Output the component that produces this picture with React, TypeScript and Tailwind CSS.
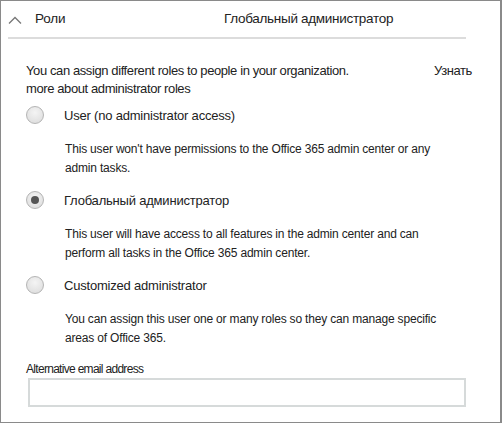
import React from "react";

function Radio({ checked }: { checked?: boolean }) {
  return (
    <div className="w-[18px] h-[18px] rounded-full border border-[#b4b4b4] bg-[radial-gradient(circle_at_50%_35%,#f4f4f4,#dadada)] flex items-center justify-center shrink-0">
      {checked && <div className="w-[8px] h-[8px] rounded-full bg-[#555555]" />}
    </div>
  );
}

function Option({
  label,
  desc,
  checked,
  mt,
}: {
  label: string;
  desc: React.ReactNode;
  checked?: boolean;
  mt: string;
}) {
  return (
    <div className="flex flex-col">
      <div className="flex items-center h-[20px]">
        <div className="w-[38px] flex">
          <Radio checked={checked} />
        </div>
        <span className="text-[13px] text-[#222] tracking-[-0.2px] mt-[2px]">{label}</span>
      </div>
      <div className={`pl-[39px] ${mt} text-[12px] leading-[19px] text-[#222] tracking-[-0.18px]`}>
        {desc}
      </div>
    </div>
  );
}

export default function App() {
  return (
    <div
      className="w-[502px] h-[423px] bg-white border-t border-l border-b border-r-2 border-[#8a8a8a] overflow-hidden"
      style={{ fontFamily: '"Liberation Sans", Arial, sans-serif' }}
    >
      <div className="ml-[7px] w-[458px] h-[38px] border-b-2 border-[#dcdcdc] flex items-center">
        <svg width="14" height="8" viewBox="0 0 14 8" className="ml-[0px] mt-[1px] shrink-0">
          <path d="M1 7.5 L7 1.5 L13 7.5" fill="none" stroke="#777" strokeWidth="1.3" />
        </svg>
        <span className="ml-[13px] w-[189px] text-[13.5px] tracking-[-0.2px] text-[#222]">Роли</span>
        <span className="text-[13.5px] tracking-[-0.3px] text-[#222]">Глобальный администратор</span>
      </div>

      <div className="pl-[25px] pt-[23px] text-[13px] leading-[18px] text-[#222] tracking-[-0.4px]">
        <div className="flex w-[446px] justify-between">
          <span>You can assign different roles to people in your organization.</span>
          <span>Узнать</span>
        </div>
        <div>more about administrator roles</div>

        <div className="mt-[7px] flex flex-col gap-[12px]">
          <Option
            mt="mt-[15px]"
            label="User (no administrator access)"
            desc={
              <>
                This user won't have permissions to the Office 365 admin center or any
                <br />
                admin tasks.
              </>
            }
          />
          <Option
            mt="mt-[15px]"
            checked
            label="Глобальный администратор"
            desc={
              <>
                This user will have access to all features in the admin center and can
                <br />
                perform all tasks in the Office 365 admin center.
              </>
            }
          />
          <Option
            mt="mt-[15px]"
            label="Customized administrator"
            desc={
              <>
                You can assign this user one or many roles so they can manage specific
                <br />
                areas of Office 365.
              </>
            }
          />
        </div>

        <div className="mt-[13px] text-[12px] text-[#222] tracking-[-0.7px] leading-[16px]">
          Alternative email address
        </div>
        <div className="mt-[1px] ml-[2px] w-[438px] h-[29px] border-2 border-[#d6dada] bg-white" />
      </div>
    </div>
  );
}
